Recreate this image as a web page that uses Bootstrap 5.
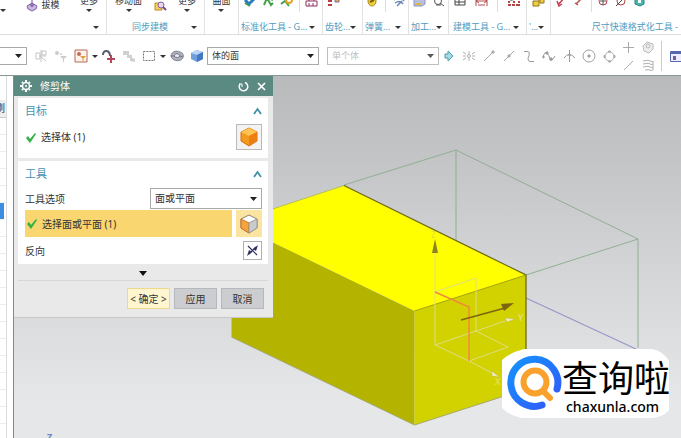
<!DOCTYPE html>
<html lang="zh-CN">
<head>
<meta charset="utf-8">
<meta name="viewport" content="width=device-width, initial-scale=1">
<title>修剪体</title>
<link href="https://cdn.jsdelivr.net/npm/bootstrap@5.3.0/dist/css/bootstrap.min.css" rel="stylesheet">
<style>
  body { font-family: "Noto Sans", "Noto Sans CJK SC", sans-serif; font-size: 10px; line-height: 14px; color: #333; background: #fff; }
  button { font: inherit; color: inherit; }
  .tool { background: none; border: 0; padding: 0; display: flex; align-items: center; justify-content: center; }
  .tri { width: 0; height: 0; border: 3px solid transparent; border-top: 3px solid #333; border-bottom: 0; flex: none; }
  /* ribbon */
  .ribbon { height: 35px; border-bottom: 1px solid #dedede; font-size: 9px; }
  .group { border-right: 1px solid #e3e3e3; flex: none; white-space: nowrap; }
  .group:last-child { border-right: 0; }
  .w-34 { width: 34px; } .w-24 { width: 24px; } .w-40 { width: 40px; } .w-46 { width: 46px; }
  .w-78 { width: 78px; } .w-84 { width: 84px; } .w-98 { width: 98px; } .w-107 { width: 107px; } .w-rest { width: 131px; }
  .tools { height: 12px; overflow: hidden; }
  .stack { flex-direction: column; line-height: 11px; gap: 3px; }
  .tools .ico { padding-bottom: 5px; }
  .tools .textual { line-height: 14px; gap: 3px; }
  .caption { color: #4f9cc0; line-height: 14px; min-height: 22px; padding: 0 7px 0 2px; }
  .thin { width: 1px; height: 12px; background: #ddd; }
  /* selection bar */
  .selbar { height: 41px; padding-top: 2px; border-bottom: 1px solid #8b9795; }
  .selbar .tool { width: 20px; height: 20px; flex: none; }
  .selbar .mini { width: 8px; }
  .combo { --bs-form-select-bg-img: none; appearance: none; height: 18px; border: 1px solid #a9a9a9; border-radius: 0; font-size: 9px; line-height: 14px; padding: 0 16px 1px 4px; color: #333;
    background: #fff url("data:image/svg+xml,%3Csvg xmlns='http://www.w3.org/2000/svg' width='8' height='5'%3E%3Cpath d='M0 0h8L4 5z' fill='%23222'/%3E%3C/svg%3E") no-repeat right 4px center / 7px 4px; }
  .combo:disabled { color: #aaa; background-color: #fff; opacity: .75; }
  .combo-a { width: 28px; margin-left: -1px; } .combo-b { width: 112px; } .combo-c { width: 112px; }
  .stacked { display: grid; grid-template-columns: 19px 19px; grid-template-rows: 18px 18px; flex: none; }
  .stacked .tool { width: 19px; height: 18px; }
  /* navigator strip */
  .strip { width: 7px; border-right: 1px solid #dcdcdc; flex: none; overflow: hidden; font-size: 10px; }
  .strip div { height: 17px; border-bottom: 1px solid #eee; }
  .strip .gap-top { height: 25px; }
  .strip .head { background: #eee; line-height: 15px; text-indent: -5px; border-color: #ccc; }
  .strip .sel { background: #3c8fe0; margin-right: 2px; }
  .gutter { width: 7px; border-right: 1px solid #7f8a89; flex: none; }
  .view { background: linear-gradient(#b9babc 0%, #c2c3c5 20%, #d3d4d6 52%, #e0e1e3 78%, #e6e7e8 90%, #e6e7e8 100%); min-width: 0; overflow: hidden; }
  /* dialog */
  .dlg { width: 259px; top: 0; left: 0; background: #e9e9e9; border-bottom: 1px solid #c6c8c8; }
  .dlg-head { background: #5b8a82; color: #fff; height: 20px; padding: 0 7px 0 6px; }
  .dlg-body { padding: 2px 5px 0 4px; }
  .sect { border: 0; border-radius: 0; padding: 4px 2px 0 7px; margin-bottom: 3px; background: #fff; color: #333; }
  .sect h2 { font-size: 11px; line-height: 18px; font-weight: 400; color: #4592b5; margin: 0; }
  .line { height: 27px; }
  .pick { width: 26px; height: 26px; border: 1px solid #b9b9b9; background: #f3f3f3; }
  .active-line { background: #f9d670; height: 27px; padding-left: 1px; }
  .active-pick { background: #fbe3a0; border: 0; height: 27px; }
  .small-pick { width: 19px; height: 19px; border: 1px solid #b0b0b0; background: #fff; }
  .combo-d { width: 112px; height: 21px; font-size: 10px; }
  .more { height: 14px; border-bottom: 1px solid #d6d6d6; width: 100%; }
  .act { width: 43px; height: 21px; border: 1px solid #b5b8bc; background: #cbcdd0; border-radius: 0; padding: 0; font-size: 10px; line-height: 18px; color: #333; }
  .act-main { background: #fff6cf; border-color: #ecd98a; }
  .acts { padding: 7px 7px 8px; }
  /* site mark */
  .mark-box { right: 12px; bottom: 20px; width: 167px; height: 69px; color: #000; text-decoration: none; white-space: nowrap; }
  .mark-text { padding-left: 60px; padding-top: 11px; }
  .mark-cn { font-size: 36px; line-height: 38px; }
  .mark-en { font: 500 14px/18px "Noto Sans", sans-serif; padding-left: 4px; }
</style>
<script src="https://cdn.jsdelivr.net/npm/bootstrap@5.3.0/dist/js/bootstrap.bundle.min.js"></script>
</head>
<body class="vh-100 d-flex flex-column overflow-hidden">

<header class="ribbon d-flex overflow-hidden flex-shrink-0">
  <div class="group w-107">
    <div class="tools d-flex align-items-end justify-content-between pe-2">
      <button class="tool stack" aria-label="面"><span class="tri"></span></button>
      <button class="tool textual"><svg width="12" height="14" viewBox="0 0 12 14"><path d="M1 8l5-3 5 3-1 3-4 2-4-2z" fill="#c9b6e0" stroke="#8067a8"/><path d="M6 2v6M4 6l2 3 2-3" stroke="#7d4f9d" fill="none"/></svg>拔模</button>
      <button class="tool stack">更多<span class="tri"></span></button>
    </div>
    <div class="caption d-flex justify-content-end align-items-center pt-2"><span class="tri"></span></div>
  </div>
  <div class="group w-98">
    <div class="tools d-flex align-items-end justify-content-between px-2">
      <button class="tool stack">移动面<span class="tri"></span></button>
      <button class="tool"><svg width="14" height="14" viewBox="0 0 14 14"><path d="M2 5h7v7H2z" fill="#f7d15c" stroke="#c38a22"/><circle cx="8" cy="7" r="3" fill="#e8d8ee" stroke="#8961a5"/><path d="M10 9l3 3" stroke="#6d4c9a" stroke-width="2"/></svg></button>
      <button class="tool stack">更多<span class="tri"></span></button>
    </div>
    <div class="caption d-flex align-items-center pt-2"><span class="flex-grow-1 text-center">同步建模</span><span class="tri"></span></div>
  </div>
  <div class="group w-34">
    <div class="tools d-flex align-items-end justify-content-center"><button class="tool stack">曲面<span class="tri"></span></button></div>
  </div>
  <div class="group w-84">
    <div class="tools d-flex align-items-end justify-content-between px-1">
      <button class="tool ico"><svg width="13" height="12" viewBox="0 0 13 12"><path d="M2 5l4 4 5-5" stroke="#2b7bc0" stroke-width="3" fill="none"/><path d="M2 8l5 3" stroke="#3c9a51" stroke-width="2"/></svg></button>
      <button class="tool ico"><svg width="13" height="12" viewBox="0 0 13 12"><path d="M2 10l3-7 4 7 2-2M6 3l5 2" stroke="#46a049" stroke-width="2" fill="none"/></svg></button>
      <button class="tool ico"><svg width="13" height="12" viewBox="0 0 13 12"><path d="M1 9l4-3 4 5" stroke="#3fa34b" stroke-width="2" fill="none"/><circle cx="9" cy="5" r="3" fill="none" stroke="#e8a022" stroke-width="2"/></svg></button>
      <span class="thin"></span>
      <button class="tool ico"><svg width="13" height="12" viewBox="0 0 13 12"><path d="M1 6h11v5H1zM4 6V2h5v4M4 8v3M8 8v3" stroke="#8c315e" fill="#fff"/></svg></button>
    </div>
    <div class="caption d-flex justify-content-between align-items-center pt-2">标准化工具 - G...<span class="tri"></span></div>
  </div>
  <div class="group w-40">
    <div class="tools d-flex align-items-end px-1"><button class="tool ico"><svg width="14" height="12" viewBox="0 0 14 12"><path d="M1 6h4M1 10h4" stroke="#b74040" stroke-width="2"/><path d="M8 3h4v4H8z" fill="#e9a43d" stroke="#7970ba"/></svg></button></div>
    <div class="caption d-flex justify-content-between align-items-center pt-2">齿轮...<span class="tri"></span></div>
  </div>
  <div class="group w-46">
    <div class="tools d-flex align-items-end justify-content-around">
      <button class="tool ico"><svg width="12" height="12" viewBox="0 0 12 12"><ellipse cx="6" cy="6" rx="4" ry="5" fill="#f2d13a" stroke="#a88713"/><path d="M4 7l4-2" stroke="#765d0b" stroke-width="2"/></svg></button>
      <span class="thin"></span>
      <button class="tool ico"><svg width="12" height="12" viewBox="0 0 12 12"><path d="M1 5c3-3 8-2 10 1M2 8c3-2 6-2 8 1M4 11l5-5" stroke="#6b86b9" stroke-width="1.5" fill="none"/></svg></button>
    </div>
    <div class="caption d-flex justify-content-between align-items-center pt-2">弹簧...<span class="tri"></span></div>
  </div>
  <div class="group w-40">
    <div class="tools d-flex align-items-end justify-content-around">
      <button class="tool ico"><svg width="13" height="12" viewBox="0 0 13 12"><path d="M1 4l3-2h8v7l-3 2H1z" fill="#b6bfe0" stroke="#8e96bd"/><path d="M2 9h6" stroke="#d8b94f" stroke-width="2"/></svg></button>
      <button class="tool ico"><svg width="12" height="12" viewBox="0 0 12 12"><circle cx="5" cy="6" r="3.500" fill="none" stroke="#555"/><path d="M7 8l4 3M3 10h5" stroke="#555"/></svg></button>
    </div>
    <div class="caption d-flex justify-content-between align-items-center pt-2">加工...<span class="tri"></span></div>
  </div>
  <div class="group w-78">
    <div class="tools d-flex align-items-end justify-content-around">
      <button class="tool ico"><svg width="12" height="12" viewBox="0 0 12 12"><path d="M1 1h10v9H1zM1 4h10M1 7h10M5 4v6" stroke="#444" fill="#fff"/></svg></button>
      <button class="tool ico"><svg width="13" height="12" viewBox="0 0 13 12"><path d="M1 1v10M12 1v10M1 6h11M4 4L1 6l3 2M9 4l3 2-3 2M3 10h7" stroke="#b44c4c" fill="none"/></svg></button>
      <span class="thin"></span>
      <button class="tool ico"><svg width="14" height="12" viewBox="0 0 14 12"><path d="M1 3h12M3 6l8-3" stroke="#888"/><path d="M1 10h3M5 10h3M9 10h4M1 7h2M6 7h2M11 7h2" stroke="#b34545" stroke-width="2"/></svg></button>
    </div>
    <div class="caption d-flex justify-content-between align-items-center pt-2 ps-1">建模工具 - G...<span class="tri"></span></div>
  </div>
  <div class="group w-24">
    <div class="tools d-flex align-items-end justify-content-center"><button class="tool ico"><svg width="13" height="12" viewBox="0 0 13 12"><path d="M1 6h6v5H1zM6 2h6v6H8V5H6z" fill="#f5cf3a" stroke="#8b761c"/></svg></button></div>
    <div class="caption d-flex justify-content-between align-items-center pt-2">'...<span class="tri"></span></div>
  </div>
  <div class="group w-rest flex-grow-1">
    <div class="tools d-flex align-items-end gap-1 ps-1">
      <button class="tool ico"><svg width="14" height="12" viewBox="0 0 14 12"><path d="M3 10l7-8M2 6l2 5 3-2" stroke="#c43c4f" stroke-width="1.500" fill="none"/></svg></button>
      <button class="tool ico"><svg width="14" height="12" viewBox="0 0 14 12"><path d="M3 9l7-7M2 8l3 2" stroke="#b2554a" stroke-width="1.500"/></svg></button>
      <span class="thin"></span>
      <button class="tool ico"><svg width="14" height="12" viewBox="0 0 14 12"><circle cx="7" cy="6" r="4" fill="none" stroke="#b73f4a"/><path d="M7 1v9M4 6h6" stroke="#555"/></svg></button>
      <button class="tool ico"><svg width="14" height="12" viewBox="0 0 14 12"><circle cx="7" cy="6" r="4" fill="none" stroke="#a44"/><path d="M2 11L12 1" stroke="#444"/></svg></button>
      <button class="tool ico"><svg width="14" height="12" viewBox="0 0 14 12"><path d="M3 5l5-3 4 3v4l-4 2-5-2z" fill="#45b5ad" stroke="#278782"/><path d="M6 5h3v3H6z" fill="#fff"/></svg></button>
    </div>
    <div class="caption text-end pt-2 pe-1">尺寸快速格式化工具 -</div>
  </div>
</header>

<nav class="selbar d-flex align-items-center overflow-hidden flex-shrink-0" aria-label="选择条">
  <select class="form-select combo combo-a flex-shrink-0 me-0" aria-label="类型过滤器"><option></option></select>
  <button class="tool ms-1"><svg width="14" height="14" viewBox="0 0 14 14" stroke="#c5c5c5" fill="none"><path d="M2 4h4v6H2zM8 2h4v4H8zM7 8l5 4M7 1v12M5 7h7"/></svg></button>
  <button class="tool"><svg width="14" height="14" viewBox="0 0 14 14" fill="#ccc"><circle cx="3" cy="4" r="2"/><circle cx="7" cy="5" r="1"/><path d="M6 7h7l-3 3v3H9v-3z"/></svg></button>
  <button class="tool"><svg width="14" height="14" viewBox="0 0 14 14"><path d="M1 1h12v12H1z" fill="#fdf3ec" stroke="#b66a51"/><circle cx="5" cy="5" r="2" fill="#c46c50"/><path d="M6 7h6L9.500 9.500V12h-1V9.500z" fill="#e49b3f"/></svg></button>
  <button class="tool mini" aria-label="更多"><span class="tri"></span></button>
  <button class="tool"><svg width="14" height="14" viewBox="0 0 14 14"><path d="M1 6c0-6 7-5 7 1" fill="none" stroke="#555e6d" stroke-width="2"/><path d="M9 6v8M5 10h8" stroke="#b7465d" stroke-width="2"/></svg></button>
  <button class="tool"><svg width="14" height="14" viewBox="0 0 14 14" fill="#d0d0d0"><path d="M1 2h6v4H1zM5 6h5v3H5z"/><path d="M8 8l5 2v3l-5-1z"/></svg></button>
  <button class="tool"><svg width="14" height="14" viewBox="0 0 14 14"><path d="M1.500 2.500h11v9h-11z" fill="none" stroke="#777" stroke-dasharray="2 1"/></svg></button>
  <button class="tool mini" aria-label="更多"><span class="tri"></span></button>
  <button class="tool"><svg width="14" height="12" viewBox="0 0 14 12"><path d="M1 6c0-4 5-6 9-4 4 1 4 5 2 7-3 3-10 2-11-3z" fill="#b0b3bf" stroke="#7e8190"/><path d="M4 6c1-3 5-3 6 0-1 2-4 2-6 0z" fill="#f0f0f4" stroke="#6d7080"/><path d="M1 6h3M10 6l3 1" stroke="#777"/></svg></button>
  <button class="tool"><svg width="14" height="14" viewBox="0 0 14 14"><path d="M1 4l6-3 6 2v7l-6 3-6-3z" fill="#6e9edc"/><path d="M1 4l6-3 6 2-6 3z" fill="#b7d5f7"/><path d="M7 6l6-3v7l-6 3z" fill="#4578c2"/></svg></button>
  <select class="form-select combo combo-b flex-shrink-0" aria-label="面规则"><option>体的面</option></select>
  <select class="form-select combo combo-c flex-shrink-0 ms-2" aria-label="体规则" disabled><option>单个体</option></select>
  <button class="tool"><svg width="10" height="12" viewBox="0 0 10 12"><path d="M1 4h3V1l5 5-5 5V8H1z" fill="#a9dbe4" stroke="#4b9dac"/></svg></button>
  <button class="tool"><svg width="14" height="12" viewBox="0 0 14 12" stroke="#b0b0b0" fill="none"><path d="M1 2l3 2M13 2l-3 2M1 10l3-2M13 10l-3-2M1 6h3M10 6h3M7 1v3M7 8v3"/><circle cx="7" cy="6" r="1.500"/></svg></button>
  <button class="tool"><svg width="12" height="12" viewBox="0 0 12 12" stroke="#aaa"><path d="M1 11l9-9"/><path d="M9 1h2v2H9z" fill="#aaa"/></svg></button>
  <button class="tool"><svg width="12" height="12" viewBox="0 0 12 12" stroke="#aaa"><path d="M1 11L11 1"/><path d="M5 5h2v2H5z" fill="#aaa"/></svg></button>
  <button class="tool"><svg width="12" height="13" viewBox="0 0 12 13" stroke="#999" fill="none"><path d="M1 1.500h4q2 0 1 4l-1 3q0 3 2 3h4"/></svg></button>
  <button class="tool"><svg width="14" height="12" viewBox="0 0 14 12" stroke="#999" fill="none"><path d="M1 7q2-6 4-4t3 6 5-3"/><path d="M4 2h2v2H4zM8 8h2v2H8zM1 6h1v2H1z" fill="#aaa"/></svg></button>
  <button class="tool"><svg width="13" height="12" viewBox="0 0 13 12" stroke="#999" fill="none"><path d="M6.500 0v12M1 8q5-7 11 0M5 5h3"/></svg></button>
  <button class="tool"><svg width="14" height="14" viewBox="0 0 14 14" stroke="#a0a0a0" fill="none"><circle cx="7" cy="7" r="6"/><path d="M6 6h2v2H6z" fill="#999"/></svg></button>
  <button class="tool"><svg width="13" height="13" viewBox="0 0 13 13" stroke="#aaa" fill="none"><circle cx="6.500" cy="6.500" r="4.500"/><path d="M5.500 1h2v1h-2zM5.500 11h2v1h-2zM1 5.500h1v2H1zM11 5.500h1v2h-1z" fill="#aaa"/></svg></button>
  <div class="stacked">
    <button class="tool"><svg width="11" height="11" viewBox="0 0 11 11" stroke="#aaa"><path d="M5.500 0v11M0 5.500h11"/></svg></button>
    <button class="tool"><svg width="12" height="13" viewBox="0 0 12 13" stroke="#bbb" fill="none"><path d="M1 5l4-4 6 2v5l-4 4-5-2z" fill="#eee"/><circle cx="6" cy="5" r="2"/></svg></button>
    <button class="tool"><svg width="11" height="11" viewBox="0 0 11 11" stroke="#aaa"><path d="M1 10l9-9"/></svg></button>
    <button class="tool"><svg width="12" height="12" viewBox="0 0 12 12" stroke="#b0b0b0" fill="none"><path d="M1 2q5-2 10 1M1 5q5-2 10 1M1 8q5-2 10 1M3 11q4-1 8 1M11 2v9"/></svg></button>
  </div>
  <span class="vr ms-1 my-1 flex-shrink-0 opacity-25"></span>
  <button class="tool ms-1"><svg width="14" height="13" viewBox="0 0 14 13"><path d="M1.500 1.500h12v10h-12z" fill="#eef" stroke="#5669ad"/><path d="M1 3h13" stroke="#5669ad" stroke-width="2"/><path d="M4 6h3v4H4z" fill="#735ca6"/></svg></button>
</nav>

<main class="d-flex flex-grow-1 overflow-hidden">
  <aside class="strip">
    <div class="gap-top"></div><div class="head">刷</div>
    <div></div><div></div><div></div><div></div><div></div><div class="sel"></div>
    <div></div><div></div><div></div><div></div><div></div><div></div><div></div><div></div><div></div><div></div><div></div><div></div>
  </aside>
  <div class="gutter"></div>
  <section class="view position-relative flex-grow-1">
    <svg class="d-block w-100 h-100" viewBox="14 76 667 362" preserveAspectRatio="xMinYMin meet" fill="none" role="img" aria-label="长方体模型">
      <path d="M344 185L456 150 638 239 526 275M456 150V240M638 239V348" stroke="#91ae93"/>
      <path d="M526 298L636 349" stroke="#9a96c8" stroke-width="1.300"/>
      <path d="M231.500 222.500L344 185.500 526 275 414.500 311z" fill="#ff0"/>
      <path d="M231.500 222.500L414.500 311V425L231.500 337z" fill="#b3b300"/>
      <path d="M414.500 311L526 275V389L414.500 425z" fill="#d2d200"/>
      <path d="M231.500 337L414.500 425 526 389" stroke="#a6a873"/>
      <path d="M231.500 222.500L344 185.500" stroke="#b7bf53"/>
      <path d="M344 185.500L526 275V389" stroke="#6f6b10" stroke-width="1.300"/>
      <path d="M414.500 311L526 275" stroke="#a5a50c"/>
      <g stroke="#dfdd83">
        <path d="M435 252V345L476 331 505 321M435 292L476 278V331L508 347 469 361 435 345M469 361L492 373"/>
      </g>
      <path d="M435 292L469 307V361" stroke="#ee8a3c" stroke-width="1.500"/>
      <path d="M435 239l3 14h-6z" fill="#8b8420"/>
      <path d="M461 320L505 308" stroke="#7e6410" stroke-width="1.500"/>
      <path d="M501 304l13-1-10 8z" fill="#7e6410"/>
      <path d="M505 318l10 1-8 3z" fill="#f1edbe" stroke="#bcb75a" stroke-width=".5"/>
      <path d="M492 371l7 6-7-1z" fill="#f1edbe" stroke="#bcb75a" stroke-width=".5"/>
      <text x="518" y="321" font-size="9" fill="#e6e397">Y</text>
      <text x="431" y="238" font-size="8" fill="#e4dc46">Z</text>
      <text x="495" y="385" font-size="9" fill="#e9e56a">X</text>
      <text x="47" y="440" font-size="9" font-weight="700" fill="#6489c9">Z</text>
    </svg>

    <form class="dlg position-absolute" aria-label="修剪体">
      <div class="dlg-head d-flex align-items-center">
        <svg width="12" height="12" viewBox="0 0 12 12" fill="none" stroke="#fff"><circle cx="6" cy="6" r="3.500" stroke-width="1.500"/><path d="M6 0v2M6 10v2M0 6h2M10 6h2M2 2l1 1M9 9l1 1M10 2L9 3M3 9l-1 1" stroke-width="2"/><circle cx="6" cy="6" r="1" fill="#fff" stroke="none"/></svg>
        <span class="ms-2 flex-grow-1">修剪体</span>
        <button type="button" class="tool me-2" aria-label="重置"><svg width="11" height="11" viewBox="0 0 11 11" fill="none" stroke="#fff" stroke-width="1.500"><path d="M7 1.500A4.300 4.300 0 1 1 2 3"/><path d="M1 3h3v3" stroke-width="1"/></svg></button>
        <button type="button" class="tool" aria-label="关闭"><svg width="9" height="9" viewBox="0 0 9 9" stroke="#fff" stroke-width="1.700"><path d="M1 1l7 7M8 1L1 8"/></svg></button>
      </div>
      <div class="dlg-body">
        <section class="card sect pb-1">
          <div class="d-flex justify-content-between"><h2>目标</h2><button type="button" class="tool me-1" aria-label="折叠"><svg width="9" height="8" viewBox="0 0 9 8" fill="none" stroke="#3f91a8" stroke-width="1.800"><path d="M1 7l3.500-5L8 7"/></svg></button></div>
          <div class="d-flex align-items-center pt-1 pb-1 pe-1 justify-content-between">
            <span class="d-flex align-items-center"><svg class="me-1" width="12" height="11" viewBox="0 0 12 11"><path d="M1 6l2-2 2 3 5-6 1 1-6 9z" fill="#2fb344"/></svg>选择体 (1)</span>
            <button type="button" class="tool pick" aria-label="选择体"><svg width="20" height="20" viewBox="0 0 20 20"><path d="M2 5l8-4 8 4v9l-8 5-8-5z" fill="#f49a1c" stroke="#d96d12"/><path d="M2 5l8-4 8 4-8 4z" fill="#ffc452"/><path d="M10 9l8-4v9l-8 5z" fill="#ec7f14"/></svg></button>
          </div>
        </section>
        <section class="card sect">
          <div class="d-flex justify-content-between"><h2>工具</h2><button type="button" class="tool me-1" aria-label="折叠"><svg width="9" height="8" viewBox="0 0 9 8" fill="none" stroke="#3f91a8" stroke-width="1.800"><path d="M1 7l3.500-5L8 7"/></svg></button></div>
          <div class="line d-flex align-items-center justify-content-between pe-1 pt-1">
            <label for="opt">工具选项</label>
            <select id="opt" class="form-select combo combo-d"><option>面或平面</option></select>
          </div>
          <div class="d-flex align-items-center pe-1">
            <span class="active-line d-flex align-items-center flex-grow-1 me-1"><svg class="me-1" width="12" height="11" viewBox="0 0 12 11"><path d="M1 6l2-2 2 3 5-6 1 1-6 9z" fill="#2fb344"/></svg>选择面或平面 (1)</span>
            <button type="button" class="tool pick active-pick" aria-label="选择面或平面"><svg width="20" height="20" viewBox="0 0 20 20"><path d="M2 5l8-4 8 4v9l-8 5-8-5z" fill="#fff" stroke="#8a8178"/><path d="M2 5l8 4v10l-8-5z" fill="#f6a33a" stroke="#c8742b"/><path d="M10 9l8-4v9l-8 5z" fill="#c9ccce" stroke="#999"/></svg></button>
          </div>
          <div class="line d-flex align-items-center justify-content-between pe-1">
            <span>反向</span>
            <button type="button" class="tool small-pick" aria-label="反向"><svg width="13" height="13" viewBox="0 0 13 13" stroke="#2d2f63" fill="#2d2f63"><path d="M3 10L10 3M2 2l9 9" fill="none" stroke-width="1.200"/><path d="M7 5l5-4-2 6zM6 8l-5 4 2-6z" stroke="none"/></svg></button>
          </div>
        </section>
        <button type="button" class="tool more" aria-label="更多选项"><svg width="8" height="5" viewBox="0 0 8 5"><path d="M0 0h8L4 5z" fill="#111"/></svg></button>
        <div class="acts d-flex justify-content-end gap-1 pe-0 me-1 ms-1">
          <button type="button" class="btn act act-main">&lt; 确定 &gt;</button>
          <button type="button" class="btn act">应用</button>
          <button type="button" class="btn act">取消</button>
        </div>
      </div>
    </form>

    <a class="mark-box position-absolute" href="#">
      <svg class="position-absolute top-0 start-0" width="167" height="69" viewBox="0 0 167 69" fill="none">
        <defs><linearGradient id="ring" x1="0" y1="0" x2="1" y2="1"><stop offset="0" stop-color="#1593ff"/><stop offset="1" stop-color="#3158f5"/></linearGradient></defs>
        <path d="M22 0H150Q161 2 167 12V61Q160 69 148 69H20Q8 67 0 59V11Q9 3 22 0z" fill="#fff"/>
        <path d="M55 40A23.500 23.500 0 1 0 40 56" stroke="url(#ring)" stroke-width="7" stroke-linecap="round"/>
        <circle cx="33" cy="33" r="11.500" stroke="#f9a12c" stroke-width="6"/>
        <path d="M41 42l7 7" stroke="#f9a12c" stroke-width="6" stroke-linecap="round"/>
      </svg>
      <div class="mark-text position-relative"><div class="mark-cn">查询啦</div><div class="mark-en">chaxunla.com</div></div>
    </a>
  </section>
</main>
</body>
</html>
